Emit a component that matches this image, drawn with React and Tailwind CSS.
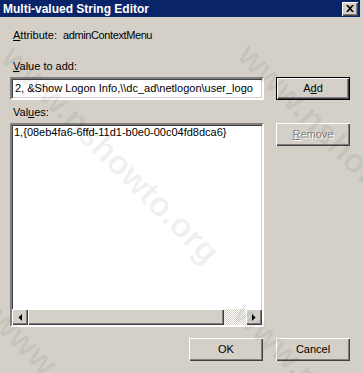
import React from "react";

const raised =
  "bg-[#d4d0c8] shadow-[inset_1px_1px_0_#ffffff,inset_-1px_-1px_0_#404040,inset_-2px_-2px_0_#808080]";
const sunken =
  "border-2 border-t-[#808080] border-l-[#808080] border-b-white border-r-white shadow-[inset_1px_1px_0_#404040,inset_-1px_-1px_0_#d4d0c8]";

function Arrow({ dir }) {
  return (
    <svg width="4" height="7" viewBox="0 0 4 7">
      {dir === "left" ? (
        <path d="M4 0 L4 7 L0.5 3.5 Z" fill="#000" />
      ) : (
        <path d="M0 0 L0 7 L3.5 3.5 Z" fill="#000" />
      )}
    </svg>
  );
}

function Watermark({ className }) {
  return (
    <div
      className={
        "absolute origin-left rotate-45 whitespace-nowrap text-[34px] font-bold leading-none text-black/[0.06] " +
        className
      }
      style={{ fontFamily: '"Liberation Sans", Arial, sans-serif' }}
    >
      www.nshowto.org
    </div>
  );
}

export default function App() {
  return (
    <div
      className="relative w-[363px] h-[373px] overflow-hidden bg-[#d4d0c8] text-[11px] leading-[13px] text-black"
      style={{ fontFamily: '"Liberation Sans", Arial, sans-serif' }}
    >
      {/* title bar */}
      <div className="mr-[3px] flex h-[17px] items-center bg-[#0a246a] pl-[3px]">
        <span className="text-[12px] font-bold leading-none text-white">
          Multi-valued String Editor
        </span>
        <div
          className={
            "ml-auto mr-[2px] flex h-[14px] w-[16px] items-center justify-center " +
            raised
          }
        >
          <svg width="8" height="7" viewBox="0 0 8 7">
            <path
              d="M0 0 L2 0 L4 2.3 L6 0 L8 0 L5 3.5 L8 7 L6 7 L4 4.7 L2 7 L0 7 L3 3.5 Z"
              fill="#000"
            />
          </svg>
        </div>
      </div>

      <div className="pl-[10px] pr-[13px]">
        <div className="mt-[12px] pl-[3px]">
          <span className="underline">A</span>ttribute:{" "}
          <span className="ml-[3px] tracking-[-0.4px]">adminContextMenu</span>
        </div>
        <div className="mt-[18px] pl-[3px]">
          <span className="underline">V</span>alue to add:
        </div>

        <div className="mt-[4px] flex">
          <div
            className={
              "flex h-[23px] w-[254px] items-center bg-white pl-[3px] " + sunken
            }
          >
            {"2, &Show Logon Info,\\\\dc_ad\\netlogon\\user_logo"}
          </div>
          <div
            className={
              "ml-[12px] flex h-[23px] w-[74px] items-center justify-center border border-black " +
              raised
            }
          >
            A<span className="underline">d</span>d
          </div>
        </div>

        <div className="mt-[6px] pl-[3px]">
          Val<span className="underline">u</span>es:
        </div>

        <div className="mt-[4px] flex items-start">
          <div
            className={
              "flex h-[204px] w-[254px] flex-col bg-white " + sunken
            }
          >
            <div className="pl-[2px] pt-[1px]">
              1,{"{"}08eb4fa6-6ffd-11d1-b0e0-00c04fd8dca6{"}"}
            </div>
            <div className="mt-auto flex h-[16px]">
              <div
                className={
                  "flex h-[16px] w-[16px] items-center justify-center " + raised
                }
              >
                <Arrow dir="left" />
              </div>
              <div className={"h-[16px] w-[196px] " + raised} />
              <div className="h-[16px] flex-1 bg-[image:repeating-conic-gradient(#ffffff_0_25%,#d4d0c8_0_50%)] bg-[length:2px_2px]" />
              <div
                className={
                  "flex h-[16px] w-[16px] items-center justify-center " + raised
                }
              >
                <Arrow dir="right" />
              </div>
            </div>
          </div>
          <div
            className={
              "ml-[12px] flex h-[23px] w-[74px] items-center justify-center text-[#808080] [text-shadow:1px_1px_0_#ffffff] " +
              raised
            }
          >
            <span className="underline">R</span>emove
          </div>
        </div>

        <div className="mt-[11px] flex justify-end gap-[13px]">
          <div
            className={
              "flex h-[23px] w-[74px] items-center justify-center " + raised
            }
          >
            OK
          </div>
          <div
            className={
              "flex h-[23px] w-[74px] items-center justify-center " + raised
            }
          >
            Cancel
          </div>
        </div>
      </div>

      {/* watermarks */}
      <div className="pointer-events-none absolute inset-0">
        <Watermark className="left-[8px] top-[34px]" />
        <Watermark className="left-[244px] top-[32px]" />
        <Watermark className="left-[-4px] top-[296px]" />
        <Watermark className="left-[240px] top-[290px]" />
      </div>
    </div>
  );
}
